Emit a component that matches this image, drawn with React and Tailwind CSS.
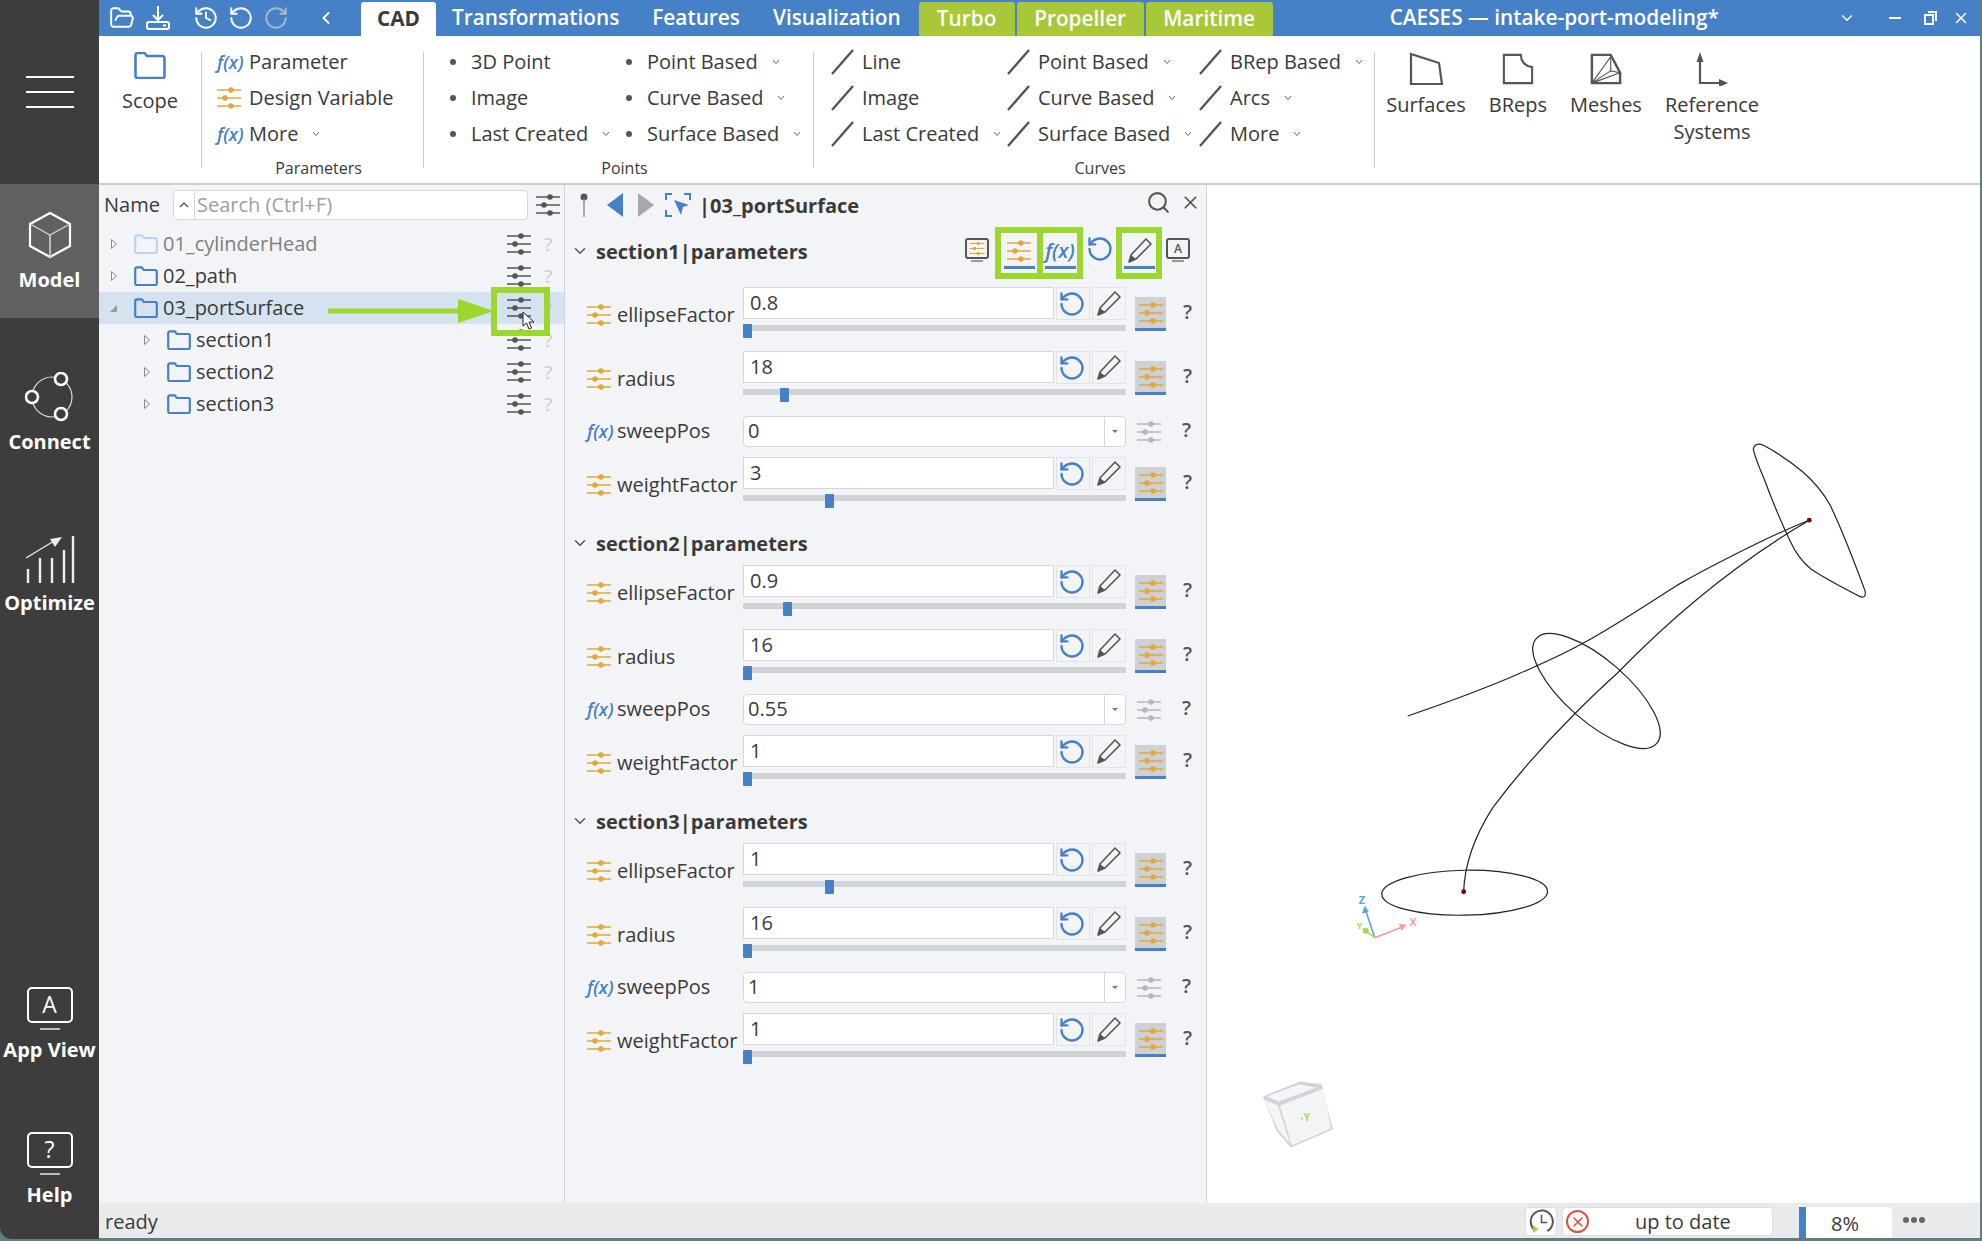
import React from "react";
import { ChevronLeft, ChevronDown, FolderOpen, History, RotateCcw, RotateCw, Search, X } from "lucide-react";

const Sliders = ({ color = "#555", className = "w-[24px] h-[24px]" }) => (
  <svg viewBox="0 0 24 24" className={className}>
    <path d="M0 4h24M0 12h24M0 20h24" stroke={color} strokeWidth="1.6" />
    <circle cx="14" cy="4" r="2.8" fill={color} />
    <circle cx="8" cy="12" r="2.8" fill={color} />
    <circle cx="14" cy="20" r="2.8" fill={color} />
  </svg>
);

const Fx = ({ className = "text-[18px]" }) => (
  <span className={`italic font-semibold text-[#4680c6] leading-none ${className}`}>f(x)</span>
);

const Folder = ({ light, className = "w-[24px] h-[20px]" }) => (
  <svg viewBox="0 0 24 20" className={className}>
    <path d="M1.2 4.5V3a1.6 1.6 0 0 1 1.6-1.6h5l2 2.6h11.4a1.6 1.6 0 0 1 1.6 1.6v11.8a1.6 1.6 0 0 1-1.6 1.6H2.8a1.6 1.6 0 0 1-1.6-1.6z" fill="none" stroke={light ? "#b9d5f5" : "#4680c6"} strokeWidth="2.2" />
  </svg>
);

const Pencil = ({ className = "w-[26px] h-[26px]", color = "#555" }) => (
  <svg viewBox="0 0 26 26" className={className}>
    <path d="M3 24l2-7L20 1l5 5-15 15z" fill="none" stroke={color} strokeWidth="1.6" strokeLinejoin="round" />
    <path d="M3 24l2-7 5 4z" fill={color} />
  </svg>
);

const Slash = () => (
  <svg viewBox="0 0 23 26" className="w-[23px] h-[26px]">
    <path d="M1 25L22 1" stroke="#555" strokeWidth="2.4" />
  </svg>
);

const Dot = () => <span className="block w-[6px] h-[6px] rounded-full bg-[#555] ml-[2px]" />;

const SmallChevron = () => (
  <svg viewBox="0 0 8 6" className="w-[8px] h-[6px] ml-[14px] shrink-0">
    <path d="M1 1l3 3.5L7 1" fill="none" stroke="#666" strokeWidth="1" />
  </svg>
);

const RibbonItem = ({ icon, iconW, label, more }) => (
  <div className="h-[36px] flex items-center text-[20px] text-[#3a3a3a] whitespace-nowrap">
    <span className={`${iconW} shrink-0 flex items-center`}>{icon}</span>
    {label}
    {more && <SmallChevron />}
  </div>
);

const RibbonCol = ({ w, iconW, icon, items }) => (
  <div className={`${w} shrink-0`}>
    {items.map(([label, more]) => (
      <RibbonItem key={label} icon={icon} iconW={iconW} label={label} more={more} />
    ))}
  </div>
);

const Sep = () => <div className="w-px h-[116px] mt-[8px] bg-[#c9ccd0] shrink-0" />;

const GroupLabel = ({ children }) => (
  <div className="mt-[6px] h-[20px] pl-[12px] text-center text-[16px] leading-[20px] text-[#3a3a3a]">{children}</div>
);

const BigButton = ({ w, icon, children, gap = "mb-[5px]" }) => (
  <div className={`${w} shrink-0 flex flex-col items-center text-[20px] leading-[27px] text-[#3a3a3a] text-center`}>
    <div className={`h-[34px] mt-[8px] ${gap}`}>{icon}</div>
    {children}
  </div>
);

const NavItem = ({ icon, label, active, className = "" }) => (
  <div className={`h-[134px] shrink-0 flex flex-col items-center pt-[23px] gap-[4px] ${active ? "bg-[#606060]" : ""} ${className}`}>
    <div className="h-[56px] flex items-center justify-center">{icon}</div>
    <span className="text-[20px] leading-[26px] font-bold text-white whitespace-nowrap">{label}</span>
  </div>
);

const ScreenNav = ({ children }) => (
  <div className="flex flex-col items-center pt-[6px]">
    <div className="w-[46px] h-[36px] border-[2px] border-white rounded-[5px] flex items-center justify-center text-[23px] text-white leading-none">{children}</div>
    <div className="w-[20px] h-[2px] bg-[#bbb] mt-[5px]" />
  </div>
);

const treeRows = [
  { name: "01_cylinderHead", light: true },
  { name: "02_path" },
  { name: "03_portSurface", open: true, active: true },
  { name: "section1", level: 1 },
  { name: "section2", level: 1 },
  { name: "section3", level: 1 },
];

const TreeRow = ({ name, light, open, active, level }) => (
  <div className={`h-[32px] flex items-center ${level ? "pl-[44px]" : "pl-[11px]"} pr-[10px] ${active ? "bg-[#d5e2f0]" : ""}`}>
    <svg viewBox="0 0 8 12" className="w-[8px] h-[12px] shrink-0">
      {open ? <path d="M7 3v7H0z" fill="#999" /> : <path d="M1.5 1.5l5 4.5-5 4.5z" fill="none" stroke="#888" strokeWidth="1" />}
    </svg>
    <span className="ml-[16px]">
      <Folder light={light} />
    </span>
    <span className={`ml-[5px] text-[20px] ${light ? "text-[#808080]" : "text-[#3a3a3a]"}`}>{name}</span>
    <span className="ml-auto">
      <Sliders />
    </span>
    <span className="ml-[11px] w-[12px] text-center text-[19px] text-[#c9c9c9]">?</span>
  </div>
);

const sections = [
  {
    name: "section1",
    tools: true,
    values: { ellipse: ["0.8", 0], radius: ["18", 37], sweep: "0", weight: ["3", 82] },
  },
  {
    name: "section2",
    values: { ellipse: ["0.9", 40], radius: ["16", 0], sweep: "0.55", weight: ["1", 0] },
  },
  {
    name: "section3",
    values: { ellipse: ["1", 82], radius: ["16", 0], sweep: "1", weight: ["1", 0] },
  },
];

const ParamLabel = ({ icon, label }) => (
  <div className="w-[156px] shrink-0 h-[56px] flex items-center">
    <span className="w-[30px] shrink-0 flex items-center">{icon}</span>
    <span className="text-[20px] text-[#3a3a3a] whitespace-nowrap">{label}</span>
  </div>
);

const ParamRow = ({ label, value, pos, h }) => (
  <div className={`flex pl-[22px] ${h}`}>
    <ParamLabel icon={<Sliders color="#e0a93b" />} label={label} />
    <div className="w-[383px] shrink-0">
      <div className="flex gap-[2px] h-[33px]">
        <div className="w-[311px] h-[32px] bg-white border border-[#d5d7da] pl-[6px] text-[20px] leading-[30px] text-[#3a3a3a]">{value}</div>
        <div className="w-[34px] h-[33px] border border-[#e2e3e6] flex items-center justify-center pr-[3px]">
          <RotateCcw className="w-[28px] h-[28px] text-[#4680c6]" strokeWidth={2} />
        </div>
        <div className="w-[34px] h-[33px] border border-[#e2e3e6] flex items-center justify-center pr-[3px]">
          <Pencil />
        </div>
      </div>
      <div className="relative h-[6px] mt-[5px] bg-[#d0d3d7]">
        <span className="absolute top-[-1px] w-[9px] h-[14px] rounded-[1px] bg-[#4680c6]" style={{ left: pos }} />
      </div>
    </div>
    <div className="ml-[9px] mt-[10px] w-[31px] h-[34px] bg-[#ced0d3] border-b-[3px] border-[#4680c6] flex items-center justify-center shrink-0">
      <Sliders color="#e0a93b" />
    </div>
    <span className="ml-[17px] mt-[10px] text-[20px] font-semibold text-[#555]">?</span>
  </div>
);

const FxRow = ({ value }) => (
  <div className="flex pl-[22px] h-[42px]">
    <div className="w-[156px] shrink-0 h-[32px] flex items-center">
      <span className="w-[30px] shrink-0 flex items-center">
        <Fx />
      </span>
      <span className="text-[20px] text-[#3a3a3a]">sweepPos</span>
    </div>
    <div className="w-[383px] h-[31px] mt-px bg-white border border-[#d5d7da] rounded-[4px] flex shrink-0">
      <span className="flex-1 pl-[4px] text-[20px] leading-[28px] text-[#3a3a3a]">{value}</span>
      <span className="w-[21px] border-l border-[#d5d7da] flex items-center justify-center">
        <span className="w-0 h-0 border-x-[3px] border-x-transparent border-t-[3px] border-t-[#4680c6]" />
      </span>
    </div>
    <span className="ml-[11px] mt-[5px]">
      <Sliders color="#b5b7ba" />
    </span>
    <span className="ml-[21px] text-[20px] font-semibold text-[#555]">?</span>
  </div>
);

const HeaderToggle = ({ w, children }) => (
  <div className={`${w} h-[52px] border-[6px] border-[#9bd72c] flex flex-col items-center shrink-0`}>
    <div className="h-[33px] pt-[3px] flex items-center justify-center">{children}</div>
    <div className="w-[31px] h-[3px] bg-[#4680c6]" />
  </div>
);

const MonitorIcon = ({ children }) => (
  <div className="mt-[11px] shrink-0 flex flex-col items-center">
    <div className="w-[24px] h-[21px] border-[2px] border-[#555] rounded-[3px] flex items-center justify-center text-[12px] font-semibold text-[#555] leading-none">
      {children}
    </div>
    <div className="w-[12px] h-[2px] bg-[#999] mt-[1px]" />
  </div>
);

const ParamSection = ({ name, values, tools }) => (
  <div className="h-[278px]">
    <div className="h-[60px] flex items-start">
      <ChevronDown className={`ml-[6px] ${tools ? "mt-[15px]" : "mt-[29px]"} w-[18px] h-[18px] text-[#555] shrink-0`} strokeWidth={2} />
      <span className={`ml-[7px] ${tools ? "mt-[11px]" : "mt-[25px]"} w-[369px] leading-[27px] shrink-0 text-[20px] font-bold text-[#3a3a3a] whitespace-nowrap`}>
        {name}|parameters
      </span>
      {tools && (
        <>
          <MonitorIcon>
            <Sliders color="#e0a93b" className="w-[16px] h-[15px]" />
          </MonitorIcon>
          <div className="ml-[6px]">
            <HeaderToggle w="w-[48px]">
              <Sliders color="#e0a93b" />
            </HeaderToggle>
          </div>
          <div className="ml-[-6px]">
            <HeaderToggle w="w-[46px]">
              <Fx className="text-[20px]" />
            </HeaderToggle>
          </div>
          <RotateCcw className="ml-[3px] mt-[8px] w-[28px] h-[28px] text-[#4680c6] shrink-0" strokeWidth={2} />
          <div className="ml-[2px]">
            <HeaderToggle w="w-[46px]">
              <Pencil />
            </HeaderToggle>
          </div>
          <div className="ml-[4px]">
            <MonitorIcon>A</MonitorIcon>
          </div>
        </>
      )}
    </div>
    <ParamRow label="ellipseFactor" value={values.ellipse[0]} pos={values.ellipse[1]} h="h-[64px]" />
    <ParamRow label="radius" value={values.radius[0]} pos={values.radius[1]} h="h-[64px]" />
    <FxRow value={values.sweep} />
    <ParamRow label="weightFactor" value={values.weight[0]} pos={values.weight[1]} h="h-[48px]" />
  </div>
);

const ViewportDrawing = () => (
  <svg viewBox="1208 185 774 1018" className="absolute inset-0 w-full h-full">
    <g fill="none" stroke="#222" strokeWidth="1.2">
      <path d="M1755 449C1756 443 1761 443 1765 445C1779 452 1793 462 1805 472C1821 486 1827 496 1832 505C1845 532 1857 564 1867 591C1868 597 1865 598 1861 596C1844 587 1828 579 1813 569C1802 560 1796 550 1792 541C1782 520 1773 498 1766 479C1761 467 1757 458 1755 449Z" />
      <ellipse cx="1598" cy="691" rx="80" ry="31" transform="rotate(41 1598 691)" />
      <path d="M1409 716C1450 702 1490 687 1522 673C1545 663 1565 654 1583 644C1620 624 1650 603 1679 585C1705 570 1770 536 1811 520" />
      <path d="M1811 520C1760 550 1690 600 1619 673C1600 690 1590 700 1576 714C1540 750 1515 780 1494 808C1480 830 1466 860 1465 892" />
      <ellipse cx="1466" cy="893" rx="83" ry="22.5" transform="rotate(-1 1466 893)" />
    </g>
    <circle cx="1811" cy="520" r="2.4" fill="#800000" />
    <circle cx="1465" cy="892" r="2.4" fill="#800000" />
    <path d="M1376 938L1367 911" stroke="#5ba6d8" strokeWidth="1.6" />
    <path d="M1366 906l-3 8 7-2z" fill="#5ba6d8" />
    <path d="M1376 938L1404 927" stroke="#ff9a9a" strokeWidth="1.6" />
    <path d="M1408 925l-8-1 3 7z" fill="#ff9a9a" />
    <path d="M1376 938L1364 929" stroke="#a8d85a" strokeWidth="1.6" />
    <circle cx="1367" cy="931" r="3" fill="#a8d85a" />
    <text x="1360" y="904" fontSize="11" fontWeight="700" fill="#5ba6d8">Z</text>
    <text x="1411" y="926" fontSize="10" fontWeight="700" fill="#ff9a9a">X</text>
    <text x="1358" y="929" fontSize="9" fontWeight="700" fill="#a8d85a">Y</text>
    <path d="M1264 1097L1301 1082L1323 1085L1334 1130L1292 1148L1278 1132Z" fill="#d0d4d8" />
    <path d="M1281 1106L1325 1089L1332 1129L1293 1146Z" fill="#f2f4f6" />
    <path d="M1268 1097L1300 1085L1318 1088L1280 1102Z" fill="#f4f5f7" />
    <path d="M1265 1100L1279 1106L1291 1144L1279 1130Z" fill="#f4f5f7" />
    <circle cx="1303" cy="1119" r="1" fill="#a8d85a" />
    <text x="1305" y="1122" fontSize="10" fontWeight="700" fill="#a8d85a">Y</text>
  </svg>
);

export default function App() {
  return (
    <div className="w-[1982px] h-[1241px] flex bg-[#5f7f7f] pr-[2px] overflow-hidden font-['Open_Sans',sans-serif]">
      {/* left nav */}
      <div className="w-[99px] h-[1239px] shrink-0 flex flex-col bg-[#3d3d3d] rounded-bl-[12px]">
        <div className="h-[184px] shrink-0 flex flex-col items-center pt-[76px] gap-[13px]">
          <span className="w-[48px] h-[2px] bg-white" />
          <span className="w-[48px] h-[2px] bg-white" />
          <span className="w-[48px] h-[2px] bg-white" />
        </div>
        <NavItem
          active
          label="Model"
          icon={
            <svg viewBox="0 0 46 48" className="w-[46px] h-[50px]" fill="none">
              <path d="M23 2l20 11v22L23 46 3 35V13z" stroke="#fff" strokeWidth="2.2" />
              <path d="M3 13l20 11 20-11" stroke="#d8d8d8" strokeWidth="1.3" />
              <path d="M23 24v22" stroke="#bbb" strokeWidth="2" />
            </svg>
          }
        />
        <NavItem
          className="mt-[28px]"
          label="Connect"
          icon={
            <svg viewBox="0 0 50 50" className="w-[50px] h-[50px]" fill="none">
              <circle cx="27" cy="25" r="20" stroke="#ddd" strokeWidth="1.2" />
              <circle cx="7" cy="25" r="6" fill="#3d3d3d" stroke="#fff" strokeWidth="2.6" />
              <circle cx="36" cy="7" r="6" fill="#3d3d3d" stroke="#fff" strokeWidth="2.6" />
              <circle cx="36" cy="42" r="6" fill="#3d3d3d" stroke="#fff" strokeWidth="2.6" />
            </svg>
          }
        />
        <NavItem
          className="mt-[27px]"
          label="Optimize"
          icon={
            <svg viewBox="0 0 50 50" className="w-[50px] h-[50px]" fill="none">
              <path d="M3 50V36M15 50V25M27 50V25M39 50V17M48 50V3" stroke="#eee" strokeWidth="2.4" />
              <path d="M1 25l28-17" stroke="#eee" strokeWidth="1.3" />
              <path d="M37 4l-12 2 5 8z" fill="#eee" />
            </svg>
          }
        />
        <NavItem className="mt-[313px]" label="App View" icon={<ScreenNav>A</ScreenNav>} />
        <NavItem className="mt-[11px]" label="Help" icon={<ScreenNav>?</ScreenNav>} />
      </div>

      <div className="flex-1 flex flex-col h-[1238px] min-w-0">
        {/* title bar */}
        <div className="h-[36px] shrink-0 bg-[#4680c6] flex items-center text-white text-[20.8px] font-semibold whitespace-nowrap">
          <FolderOpen className="ml-[10px] w-[26px] h-[26px] shrink-0" strokeWidth={1.8} />
          <svg viewBox="0 0 26 26" className="ml-[10px] w-[26px] h-[26px] shrink-0" fill="none" stroke="#fff" strokeWidth="2">
            <path d="M13 1v13M8 10l5 5 5-5" />
            <rect x="2" y="17" width="22" height="7" rx="2" />
            <path d="M18 20.5h3" />
          </svg>
          <History className="ml-[22px] w-[26px] h-[26px] shrink-0" strokeWidth={1.8} />
          <RotateCcw className="ml-[9px] w-[26px] h-[26px] shrink-0" strokeWidth={1.8} />
          <RotateCw className="ml-[9px] w-[26px] h-[26px] text-[#a9b8c9] shrink-0" strokeWidth={1.8} />
          <ChevronLeft className="ml-[27px] w-[20px] h-[20px] shrink-0" strokeWidth={2.2} />
          <div className="ml-[25px] w-[75px] h-[34px] mt-[2px] bg-white rounded-t-[3px] text-[#3a3a3a] font-bold flex items-center justify-center shrink-0">CAD</div>
          <span className="ml-[16px]">Transformations</span>
          <span className="ml-[33px]">Features</span>
          <span className="ml-[33px]">Visualization</span>
          <div className="ml-[18px] w-[96px] h-[34px] mt-[2px] bg-[#a8c838] rounded-t-[3px] flex items-center justify-center shrink-0">Turbo</div>
          <div className="ml-[2px] w-[127px] h-[34px] mt-[2px] bg-[#a8c838] rounded-t-[3px] flex items-center justify-center shrink-0">Propeller</div>
          <div className="ml-[2px] w-[127px] h-[34px] mt-[2px] bg-[#a8c838] rounded-t-[3px] flex items-center justify-center shrink-0">Maritime</div>
          <span className="ml-[117px] w-[327px] shrink-0">CAESES — intake-port-modeling*</span>
          <ChevronDown className="ml-[121px] w-[18px] h-[18px] shrink-0" strokeWidth={1.8} />
          <span className="ml-[33px] w-[12px] h-[2px] bg-white shrink-0" />
          <svg viewBox="0 0 13 14" className="ml-[23px] w-[13px] h-[14px] shrink-0" fill="none" stroke="#fff" strokeWidth="2">
            <rect x="1" y="4" width="8" height="9" />
            <path d="M4 1h8v9" />
          </svg>
          <X className="ml-[15px] w-[18px] h-[18px] shrink-0" strokeWidth={2} />
        </div>

        {/* ribbon */}
        <div className="h-[149px] shrink-0 bg-white border-b-2 border-[#ccced2] flex pt-[8px]">
          <div className="w-[102px] shrink-0">
            <BigButton
              w="w-[102px]"
              gap="mb-[1px]"
              icon={
                <svg viewBox="0 0 32 27" className="w-[32px] h-[27px]">
                  <path d="M1.5 5V3a2 2 0 0 1 2-2h7l2.5 3h15a2.5 2.5 0 0 1 2.5 2.5V24a2 2 0 0 1-2 2h-25a2 2 0 0 1-2-2z" fill="none" stroke="#4680c6" strokeWidth="2.6" />
                </svg>
              }
            >
              Scope
            </BigButton>
          </div>
          <Sep />
          <div className="w-[221px] shrink-0 flex flex-col">
            <div className="pl-[15px]">
              <RibbonItem iconW="w-[32px]" icon={<Fx />} label="Parameter" />
              <RibbonItem iconW="w-[32px]" icon={<Sliders color="#e0a93b" />} label="Design Variable" />
              <RibbonItem iconW="w-[32px]" icon={<Fx />} label="More" more />
            </div>
            <GroupLabel>Parameters</GroupLabel>
          </div>
          <Sep />
          <div className="w-[389px] shrink-0 flex flex-col">
            <div className="pl-[24px] flex">
              <RibbonCol
                w="w-[176px]"
                iconW="w-[23px]"
                icon={<Dot />}
                items={[["3D Point"], ["Image"], ["Last Created", true]]}
              />
              <RibbonCol
                w="w-[189px]"
                iconW="w-[23px]"
                icon={<Dot />}
                items={[["Point Based", true], ["Curve Based", true], ["Surface Based", true]]}
              />
            </div>
            <GroupLabel>Points</GroupLabel>
          </div>
          <Sep />
          <div className="w-[560px] shrink-0 flex flex-col">
            <div className="pl-[17px] flex">
              <RibbonCol w="w-[176px]" iconW="w-[31px]" icon={<Slash />} items={[["Line"], ["Image"], ["Last Created", true]]} />
              <RibbonCol w="w-[192px]" iconW="w-[31px]" icon={<Slash />} items={[["Point Based", true], ["Curve Based", true], ["Surface Based", true]]} />
              <RibbonCol w="w-[175px]" iconW="w-[31px]" icon={<Slash />} items={[["BRep Based", true], ["Arcs", true], ["More", true]]} />
            </div>
            <GroupLabel>Curves</GroupLabel>
          </div>
          <Sep />
          <BigButton
            w="w-[102px]"
            icon={
              <svg viewBox="0 0 34 34" className="w-[34px] h-[34px]" fill="none">
                <path d="M2 2l28 9 3 21H2z" stroke="#555" strokeWidth="2.2" />
              </svg>
            }
          >
            Surfaces
          </BigButton>
          <BigButton
            w="w-[82px]"
            icon={
              <svg viewBox="0 0 34 34" className="w-[32px] h-[34px]" fill="none">
                <path d="M2 2h18c0 6 4 12 12 13v17H2z" stroke="#555" strokeWidth="2.2" />
              </svg>
            }
          >
            BReps
          </BigButton>
          <BigButton
            w="w-[94px]"
            icon={
              <svg viewBox="0 0 34 34" className="w-[32px] h-[34px]" fill="none">
                <path d="M2 2h20l10 19v11H2z" stroke="#555" strokeWidth="2.6" />
                <path d="M2 32L22 4M2 32l20-13 10 2M2 32L32 21M22 4v15" stroke="#555" strokeWidth="1.2" />
              </svg>
            }
          >
            Meshes
          </BigButton>
          <BigButton
            w="w-[118px]"
            icon={
              <svg viewBox="0 0 34 34" className="w-[34px] h-[34px]" fill="none">
                <path d="M5 7v24h24" stroke="#555" strokeWidth="2.2" />
                <path d="M5 0l-3.5 10h7z" fill="#555" />
                <path d="M33 31l-9-4v8z" fill="#555" />
              </svg>
            }
          >
            Reference
            <br />
            Systems
          </BigButton>
        </div>

        {/* work area */}
        <div className="h-[1018px] shrink-0 flex">
          {/* tree */}
          <div className="relative w-[466px] shrink-0 bg-[#f3f4f7] border-r border-[#d0d2d6]">
            <div className="h-[43px] pt-[5px] flex items-start">
              <span className="ml-[5px] w-[69px] h-[30px] text-[20px] leading-[30px] text-[#3a3a3a]">Name</span>
              <div className="w-[355px] h-[30px] bg-white border border-[#d5d7da] rounded-[4px] flex items-center shrink-0">
                <span className="w-[21px] h-full border-r border-[#d5d7da] flex items-center justify-center shrink-0">
                  <svg viewBox="0 0 10 6" className="w-[10px] h-[6px]" fill="none">
                    <path d="M1 5l4-4 4 4" stroke="#555" strokeWidth="1.4" />
                  </svg>
                </span>
                <span className="ml-[2px] text-[20px] text-[#a0a0a0]">Search (Ctrl+F)</span>
              </div>
              <span className="ml-[8px] mt-[3px]">
                <Sliders />
              </span>
            </div>
            {treeRows.map((row) => (
              <TreeRow key={row.name} {...row} />
            ))}
            {/* annotation over the tree */}
            <svg viewBox="0 0 166 24" className="absolute left-[229px] top-[114px] w-[166px] h-[24px]">
              <path d="M0 9.5h130V0l36 12-36 12v-9.5H0z" fill="#9bd72c" />
            </svg>
            <div className="absolute left-[392px] top-[102px] w-[59px] h-[49px] border-[6px] border-[#9bd72c]" />
            <svg viewBox="0 0 13 19" className="absolute left-[423px] top-[126px] w-[13px] h-[19px]">
              <path d="M1 1v14l3.5-3 2.5 6 2.5-1-2.5-6H12z" fill="#fff" stroke="#222" strokeWidth="1" />
            </svg>
          </div>

          {/* parameter panel */}
          <div className="w-[642px] shrink-0 bg-[#f3f4f7] border-r border-[#d0d2d6] flex flex-col">
            <div className="h-[42px] shrink-0 flex items-center">
              <svg viewBox="0 0 8 24" className="ml-[15px] mb-[2px] w-[8px] h-[24px] shrink-0">
                <circle cx="4" cy="4" r="3.5" fill="#555" />
                <path d="M4 6v18" stroke="#999" strokeWidth="1.6" />
              </svg>
              <svg viewBox="0 0 16 24" className="ml-[19px] mb-[2px] w-[16px] h-[24px] shrink-0">
                <path d="M16 0v24L0 12z" fill="#4680c6" />
              </svg>
              <svg viewBox="0 0 16 24" className="ml-[15px] mb-[2px] w-[16px] h-[24px] shrink-0">
                <path d="M0 0v24l16-12z" fill="#a6a8ab" />
              </svg>
              <svg viewBox="0 0 26 24" className="ml-[11px] mb-[2px] w-[26px] h-[24px] shrink-0" fill="none">
                <path d="M1 7V1h6M19 1h6v6M1 17v6h6" stroke="#4680c6" strokeWidth="2" />
                <path d="M9 7l15 5-6 2-2 8z" fill="#4680c6" />
              </svg>
              <span className="ml-[8px] w-[300px] shrink-0 text-[20px] font-bold text-[#3a3a3a] whitespace-nowrap">|03_portSurface</span>
              <Search className="ml-[147px] mb-[8px] w-[25px] h-[25px] text-[#555] shrink-0" strokeWidth={2} />
              <X className="ml-[9px] mb-[8px] w-[21px] h-[21px] text-[#555] shrink-0" strokeWidth={2} />
            </div>
            {sections.map((s) => (
              <ParamSection key={s.name} {...s} />
            ))}
          </div>

          {/* viewport */}
          <div className="relative flex-1 bg-white">
            <ViewportDrawing />
          </div>
        </div>

        {/* status bar */}
        <div className="flex-1 bg-[#e9eaec] flex items-start text-[#3a3a3a]">
          <span className="ml-[6px] mt-[6px] w-[60px] shrink-0 text-[20px] leading-[26px]">ready</span>
          <div className="ml-[1360px] mt-[4px] w-[32px] h-[29px] bg-white border border-[#dcdde0] rounded-[4px] flex items-center justify-center shrink-0">
            <svg viewBox="0 0 26 26" className="w-[25px] h-[25px]" fill="none">
              <path d="M5 21A11.5 11.5 0 1 1 19 23" stroke="#555" strokeWidth="2" />
              <path d="M13 6v8h6" stroke="#555" strokeWidth="1.6" />
              <path d="M4 17l6 4-6 4z" fill="#9bd72c" />
            </svg>
          </div>
          <div className="ml-[5px] mt-[4px] w-[211px] h-[29px] bg-white border border-[#dcdde0] rounded-[4px] flex items-center shrink-0">
            <span className="ml-[3px] w-[23px] h-[23px] border-[2px] border-[#e0503f] rounded-full flex items-center justify-center shrink-0">
              <X className="w-[16px] h-[16px] text-[#e0503f]" strokeWidth={2.4} />
            </span>
            <span className="ml-[46px] text-[20px]">up to date</span>
          </div>
          <div className="ml-[26px] mt-[4px] w-[93px] h-[31px] bg-white border-l-[7px] border-[#4680c6] rounded-tr-[4px] pr-[8px] text-center text-[20px] leading-[34px] shrink-0">8%</div>
          <div className="ml-[11px] mt-[14px] flex gap-[2px] shrink-0">
            <span className="w-[6px] h-[6px] rounded-full bg-[#666]" />
            <span className="w-[6px] h-[6px] rounded-full bg-[#666]" />
            <span className="w-[6px] h-[6px] rounded-full bg-[#666]" />
          </div>
        </div>
      </div>
    </div>
  );
}
